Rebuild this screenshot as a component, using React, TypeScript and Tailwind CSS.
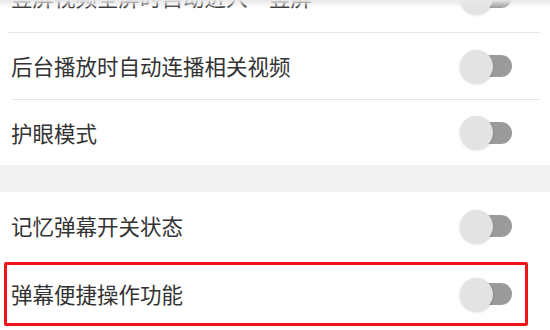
import React from "react";

function Toggle() {
  return (
    <div className="relative w-[52px] h-[33px] shrink-0">
      <div className="absolute right-0 top-1/2 -translate-y-1/2 w-[40px] h-[22px] rounded-full bg-[#9b9b9b]" />
      <div className="absolute left-0 top-0 w-[33px] h-[33px] rounded-full bg-[#e3e3e3] shadow-[0_1px_3px_rgba(0,0,0,0.18)]" />
    </div>
  );
}

function Row({ label, h, boxed }: { label: string; h: string; boxed?: boolean }) {
  return (
    <div className={"relative flex items-center justify-between pl-[11px] pr-[38px] " + h}>
      <span className="text-[21.5px] leading-none text-[#333333]">{label}</span>
      <Toggle />
      {boxed && (
        <div className="absolute left-[4px] top-[2px] bottom-[2px] w-[524px] border-[3px] border-[#f0141a] rounded-[2px]" />
      )}
    </div>
  );
}

export default function App() {
  return (
    <div
      className="relative w-[550px] h-[330px] overflow-hidden bg-white"
      style={{ fontFamily: '"Noto Sans CJK SC", "Noto Sans", sans-serif' }}
    >
      <div className="mt-[-38px]">
        <Row label="竖屏视频全屏时自动进入“竖屏”" h="h-[70px]" />
        <div className="ml-[8px] mr-[10px] h-px bg-[#e6e6e6]" />
        <Row label="后台播放时自动连播相关视频" h="h-[66px]" />
        <div className="ml-[12px] mr-[10px] h-px bg-[#e6e6e6]" />
        <Row label="护眼模式" h="h-[65px]" />
        <div className="h-[27px] bg-[#f2f2f2]" />
        <Row label="记忆弹幕开关状态" h="h-[68px]" />
        <Row label="弹幕便捷操作功能" h="h-[68px]" boxed />
      </div>
      <div className="pointer-events-none absolute inset-x-0 top-0 h-[8px] bg-gradient-to-b from-[#e8e8e8] to-transparent" />
    </div>
  );
}
